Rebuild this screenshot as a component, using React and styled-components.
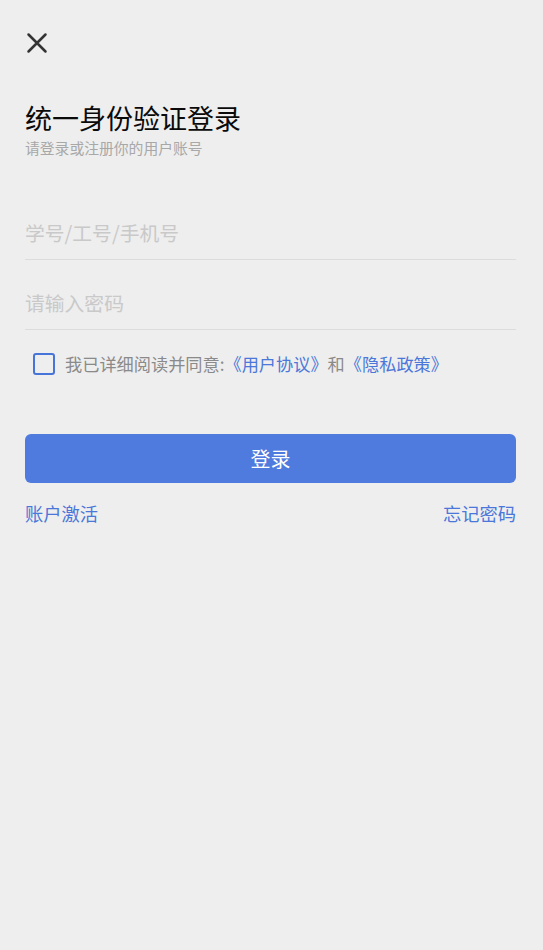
import React from "react";
import styled, { createGlobalStyle } from "styled-components";

const Global = createGlobalStyle`
  html, body {
    margin: 0;
    padding: 0;
    background: #eeeeee;
  }
  body {
    font-family: "Noto Sans CJK SC", "Noto Sans", sans-serif;
  }
`;

const Page = styled.div`
  min-height: 950px;
  background: #eeeeee;
  padding: 32px 27px 0 25px;
  box-sizing: border-box;
`;

const CloseBtn = styled.button`
  display: block;
  margin: 0 0 0 1px;
  padding: 0;
  border: 0;
  background: none;
  width: 22px;
  height: 22px;
  cursor: pointer;
`;

const Header = styled.div`
  margin-top: 48px;
`;

const Title = styled.h1`
  margin: 0;
  font-size: 27px;
  font-weight: 400;
  line-height: 32px;
  color: #0a0a0a;
`;

const Subtitle = styled.p`
  margin: 4px 0 0;
  font-size: 14.8px;
  line-height: 20px;
  color: #a8a8a8;
`;

const Form = styled.form`
  margin-top: 33px;
`;

const Field = styled.div`
  height: 69px;
  border-bottom: 1px solid #dcdcdc;
  display: flex;
  align-items: flex-end;
  padding-bottom: 12px;
  box-sizing: border-box;
  & + & {
    height: 70px;
  }
`;

const Input = styled.input`
  width: 100%;
  border: 0;
  outline: none;
  background: transparent;
  padding: 0;
  font-family: inherit;
  font-size: 19.8px;
  line-height: 28px;
  height: 28px;
  color: #333;
  &::placeholder {
    color: #c9c9c9;
  }
`;

const Agree = styled.label`
  display: flex;
  align-items: center;
  margin-top: 22px;
  padding-left: 8px;
  font-size: 17.2px;
  line-height: 24px;
  color: #8a8a8a;
`;

const Box = styled.span`
  width: 18px;
  height: 18px;
  border: 2px solid #4774d8;
  border-radius: 3px;
  margin-right: 10px;
  flex-shrink: 0;
`;

const Link = styled.a`
  color: #4a77d9;
  text-decoration: none;
  cursor: pointer;
`;

const Submit = styled.button`
  display: block;
  width: 100%;
  height: 49px;
  margin-top: 58px;
  border: 0;
  border-radius: 6px;
  background: #4f7ade;
  color: #fff;
  font-family: inherit;
  font-size: 20px;
  cursor: pointer;
`;

const Footer = styled.div`
  display: flex;
  justify-content: space-between;
  margin-top: 17px;
  font-size: 18.3px;
  line-height: 26px;
`;

export default function App() {
  return (
    <Page>
      <Global />
      <CloseBtn aria-label="关闭">
        <svg width="22" height="22" viewBox="0 0 22 22">
          <path
            d="M2.5 2.5 L19.5 19.5 M19.5 2.5 L2.5 19.5"
            stroke="#333"
            strokeWidth="2.5"
            strokeLinecap="round"
          />
        </svg>
      </CloseBtn>
      <Header>
        <Title>统一身份验证登录</Title>
        <Subtitle>请登录或注册你的用户账号</Subtitle>
      </Header>
      <Form onSubmit={(e) => e.preventDefault()}>
        <Field>
          <Input placeholder="学号/工号/手机号" />
        </Field>
        <Field>
          <Input type="password" placeholder="请输入密码" />
        </Field>
        <Agree>
          <Box />
          我已详细阅读并同意:<Link>《用户协议》</Link>和<Link>《隐私政策》</Link>
        </Agree>
        <Submit type="submit">登录</Submit>
      </Form>
      <Footer>
        <Link>账户激活</Link>
        <Link>忘记密码</Link>
      </Footer>
    </Page>
  );
}
